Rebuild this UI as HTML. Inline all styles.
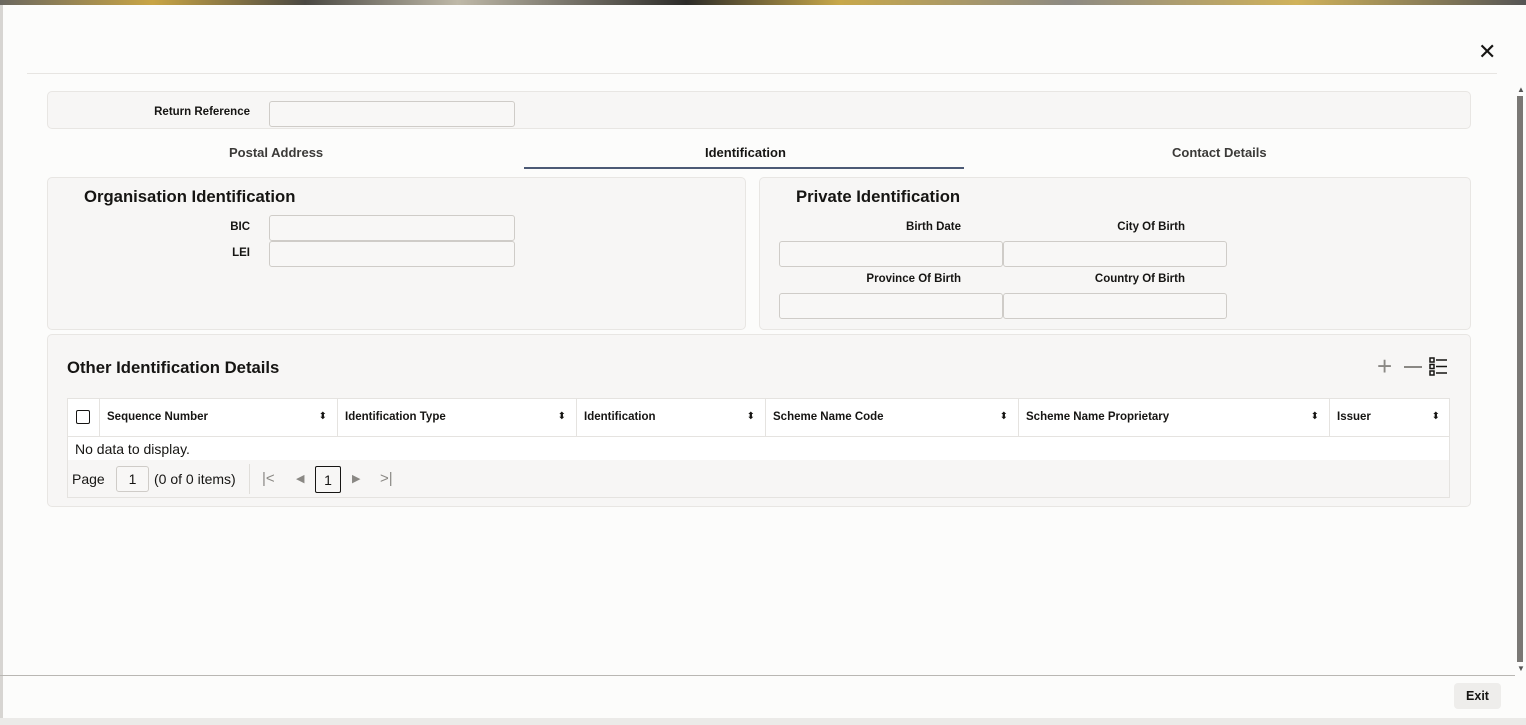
<!DOCTYPE html>
<html><head><style>
body{margin:0;width:1526px;height:725px;overflow:hidden;background:#fcfcfb;font-family:"Liberation Sans",sans-serif;color:#161513;position:relative}
.a{position:absolute}
.panel{position:absolute;background:#f7f6f5;border:1px solid #e8e6e3;border-radius:5px}
.inp{position:absolute;background:#f8f7f6;border:1px solid #cfccc8;border-radius:3px;height:24px}
.lbl{position:absolute;font-size:11.5px;font-weight:bold;text-align:right}
.th{position:absolute;top:398px;height:38px;line-height:38px;font-size:11.5px;font-weight:bold;border-right:1px solid #e5e3e0;box-sizing:border-box;padding-left:7px}
.sort{position:absolute;right:10px;top:0;font-size:10px;font-weight:normal}
</style></head><body>
<div class="a" style="left:0;top:0;width:1526px;height:5px;background:linear-gradient(90deg,#6b6860,#c9a545 10%,#4a4842 20%,#bfb9a8 30%,#2c2b28 45%,#c8a84a 55%,#8d8a83 70%,#d0b25a 85%,#555)"></div>
<div class="a" style="left:0;top:5px;width:3px;height:720px;background:#d7d5d2"></div>
<div class="a" style="left:1478px;top:40px;font-size:22px;line-height:24px">✕</div>
<div class="a" style="left:27px;top:73px;width:1470px;height:1px;background:#e7e5e2"></div>
<div class="a" style="left:1517px;top:85px;width:6px;height:8px;font-size:8px;color:#555">▲</div>
<div class="a" style="left:1517px;top:96px;width:6px;height:566px;background:#7a7875"></div>
<div class="a" style="left:1517px;top:664px;font-size:8px;color:#555">▼</div>

<div class="panel" style="left:47px;top:91px;width:1422px;height:36px"></div>
<div class="lbl" style="left:100px;top:106px;width:150px">Return Reference</div>
<div class="inp" style="left:269px;top:101px;width:244px"></div>

<div class="a" style="left:229px;top:145px;font-size:13px;font-weight:bold;color:#3b3a38">Postal Address</div>
<div class="a" style="left:705px;top:145px;font-size:13px;font-weight:bold">Identification</div>
<div class="a" style="left:1172px;top:145px;font-size:13px;font-weight:bold;color:#3b3a38">Contact Details</div>
<div class="a" style="left:524px;top:167px;width:440px;height:2px;background:#4c5a75"></div>

<div class="panel" style="left:47px;top:177px;width:697px;height:151px"></div>
<div class="a" style="left:84px;top:187px;font-size:16.7px;font-weight:bold">Organisation Identification</div>
<div class="lbl" style="left:150px;top:221px;width:100px">BIC</div>
<div class="inp" style="left:269px;top:215px;width:244px"></div>
<div class="lbl" style="left:150px;top:247px;width:100px">LEI</div>
<div class="inp" style="left:269px;top:241px;width:244px"></div>

<div class="panel" style="left:759px;top:177px;width:710px;height:151px"></div>
<div class="a" style="left:796px;top:187px;font-size:16.7px;font-weight:bold">Private Identification</div>
<div class="lbl" style="left:800px;top:221px;width:161px">Birth Date</div>
<div class="lbl" style="left:1020px;top:221px;width:165px">City Of Birth</div>
<div class="inp" style="left:779px;top:241px;width:222px"></div>
<div class="inp" style="left:1003px;top:241px;width:222px"></div>
<div class="lbl" style="left:800px;top:273px;width:161px">Province Of Birth</div>
<div class="lbl" style="left:1020px;top:273px;width:165px">Country Of Birth</div>
<div class="inp" style="left:779px;top:293px;width:222px"></div>
<div class="inp" style="left:1003px;top:293px;width:222px"></div>

<div class="panel" style="left:47px;top:334px;width:1422px;height:171px"></div>
<div class="a" style="left:67px;top:358px;font-size:16.7px;font-weight:bold">Other Identification Details</div>
<div class="a" style="left:1377px;top:352px;font-size:26px;color:#8a8884;line-height:28px;font-weight:300">+</div>
<div class="a" style="left:1404px;top:366px;width:18px;height:1.5px;background:#8a8884"></div>
<svg class="a" style="left:1429px;top:357px" width="19" height="19" viewBox="0 0 19 19"><g fill="none" stroke="#161513" stroke-width="1.5"><rect x="1" y="1" width="4" height="4"/><rect x="1" y="7.5" width="4" height="4"/><rect x="1" y="14" width="4" height="4"/><path d="M7 3h11M7 9.5h11M7 16h11"/></g></svg>

<div class="a" style="left:67px;top:398px;width:1383px;height:100px;background:#f7f6f5;border:1px solid #e5e3e0;box-sizing:border-box"></div>
<div class="a" style="left:67px;top:398px;width:1383px;height:62px;background:#fff;border:1px solid #e5e3e0;box-sizing:border-box;border-bottom:none"></div>
<div class="a" style="left:68px;top:436px;width:1381px;height:1px;background:#e5e3e0"></div>
<div class="th" style="left:67px;width:33px"><div class="a" style="left:9px;top:12px;width:12px;height:12px;border:1.5px solid #161513;border-radius:2px"></div></div>
<div class="th" style="left:100px;width:238px">Sequence Number<span class="sort">⬍</span></div>
<div class="th" style="left:338px;width:239px">Identification Type<span class="sort">⬍</span></div>
<div class="th" style="left:577px;width:189px">Identification<span class="sort">⬍</span></div>
<div class="th" style="left:766px;width:253px">Scheme Name Code<span class="sort">⬍</span></div>
<div class="th" style="left:1019px;width:311px">Scheme Name Proprietary<span class="sort">⬍</span></div>
<div class="th" style="left:1330px;width:120px;border-right:none">Issuer<span class="sort">⬍</span></div>
<div class="a" style="left:75px;top:441px;font-size:14px">No data to display.</div>
<div class="a" style="left:72px;top:471px;font-size:14px">Page</div>
<div class="a" style="left:116px;top:466px;width:33px;height:26px;border:1px solid #cfccc8;border-radius:3px;background:#f8f7f6;box-sizing:border-box;text-align:center;line-height:25px;font-size:14px">1</div>
<div class="a" style="left:154px;top:471px;font-size:14px">(0 of 0 items)</div>
<div class="a" style="left:249px;top:464px;width:1px;height:30px;background:#e0deda"></div>
<div class="a" style="left:262px;top:470px;font-size:15px;color:#8a8884">|&lt;</div>
<div class="a" style="left:296px;top:472px;font-size:11px;color:#8a8884">◀</div>
<div class="a" style="left:315px;top:466px;width:26px;height:27px;border:1px solid #161513;border-radius:2px;box-sizing:border-box;text-align:center;line-height:26px;font-size:14px">1</div>
<div class="a" style="left:352px;top:472px;font-size:11px;color:#8a8884">▶</div>
<div class="a" style="left:380px;top:470px;font-size:15px;color:#8a8884">&gt;|</div>

<div class="a" style="left:0;top:675px;width:1515px;height:1px;background:#b9b7b3"></div>
<div class="a" style="left:1454px;top:683px;width:47px;height:26px;background:#eeedeb;border-radius:4px;font-size:12.5px;font-weight:bold;text-align:center;line-height:26px">Exit</div>
<div class="a" style="left:0;top:718px;width:1526px;height:7px;background:#ebeae8"></div>
</body></html>
